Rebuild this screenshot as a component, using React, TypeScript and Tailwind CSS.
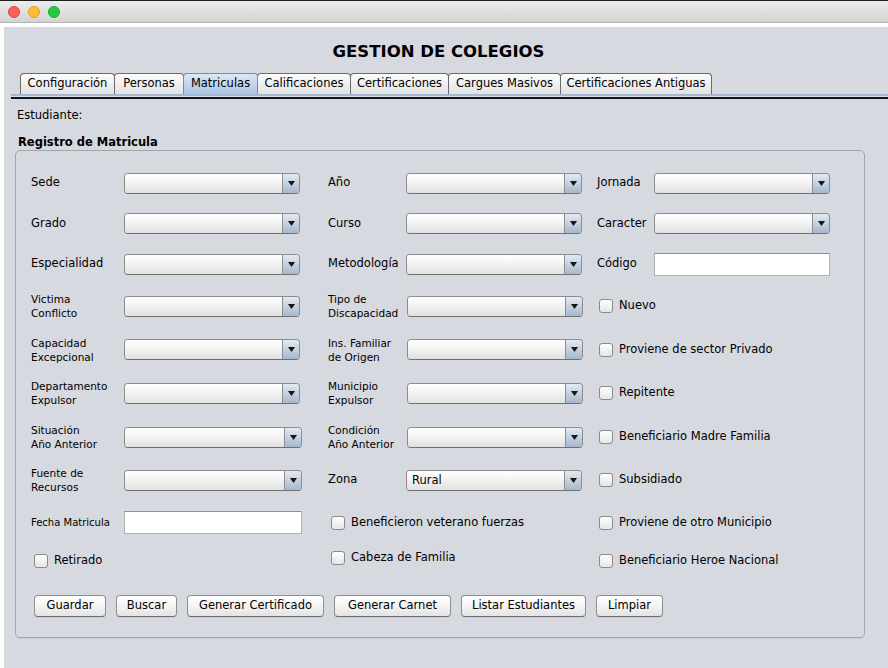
import React from 'react';

const TABS = [
  { name: 'Configuración', w: 'w-[95px]' },
  { name: 'Personas', w: 'w-[70px]' },
  { name: 'Matriculas', w: 'w-[75px]', active: true },
  { name: 'Calificaciones', w: 'w-[94px]' },
  { name: 'Certificaciones', w: 'w-[99px]' },
  { name: 'Cargues Masivos', w: 'w-[113px]' },
  { name: 'Certificaciones Antiguas', w: 'w-[152px]' },
];

const BUTTONS = [
  { name: 'Guardar', w: 'w-[72px]' },
  { name: 'Buscar', w: 'w-[61px]' },
  { name: 'Generar Certificado', w: 'w-[137px]' },
  { name: 'Generar Carnet', w: 'w-[117px]' },
  { name: 'Listar Estudiantes', w: 'w-[125px]' },
  { name: 'Limpiar', w: 'w-[67px]' },
];

function Combo({ className = 'w-[176px]', value }: { className?: string; value?: string }) {
  return (
    <div
      className={`flex h-[21px] overflow-hidden rounded-[4px] border border-[#8d8d8d] border-b-[#6f6f6f] ${className}`}
    >
      <div className="flex-1 bg-gradient-to-b from-[#ffffff] via-[#f2f2f2] to-[#e1e1e1] pl-[5px] text-[11.5px] leading-[19px] text-black">
        {value}
      </div>
      <div className="flex w-[17px] items-center justify-center border-l border-[#8d8d8d] bg-gradient-to-b from-[#e3eaf3] to-[#a6b8ce]">
        <svg width="7" height="5" viewBox="0 0 7 5">
          <path d="M0 0h7L3.5 5z" fill="#151515" />
        </svg>
      </div>
    </div>
  );
}

function TextField({ className = 'w-[176px]' }: { className?: string }) {
  return (
    <div className={`h-[23px] border border-[#b0b0b0] border-t-[#8f8f8f] bg-white ${className}`} />
  );
}

function Check({ label, className = '' }: { label: string; className?: string }) {
  return (
    <div className={`flex items-center gap-[6px] ${className}`}>
      <span className="h-[14px] w-[14px] rounded-[3px] border border-[#8a8a8a] bg-gradient-to-b from-white to-[#e6e6e6]" />
      <span className="text-[11.5px] text-black">{label}</span>
    </div>
  );
}

function Label({ children, w, two }: { children: React.ReactNode; w: string; two?: boolean }) {
  return (
    <div className={`${w} shrink-0 text-black ${two ? 'text-[10.5px] leading-[14px]' : 'text-[11.5px]'}`}>
      {children}
    </div>
  );
}

// column A starts at x=31, B at x=328, C at x=597
function CellA({ children }: { children: React.ReactNode }) {
  return <div className="flex w-[297px] shrink-0 items-center">{children}</div>;
}
function CellB({ children, className = '' }: { children: React.ReactNode; className?: string }) {
  return <div className={`flex w-[269px] shrink-0 items-center ${className}`}>{children}</div>;
}
function CellC({ children }: { children: React.ReactNode }) {
  return <div className="flex items-center">{children}</div>;
}

export default function App() {
  return (
    <div className="h-[668px] w-[888px] overflow-hidden bg-white font-['DejaVu_Sans',sans-serif]">
      {/* Title bar */}
      <div className="flex h-[23px] items-center gap-[8px] border-t border-b border-t-[#1e1e1e] border-b-[#b3b3b3] bg-gradient-to-b from-[#ececec] to-[#d4d4d4] pl-[8px]">
        <span className="h-[12px] w-[12px] rounded-full border border-[#e0443e] bg-[#fe5f57]" />
        <span className="h-[12px] w-[12px] rounded-full border border-[#dea123] bg-[#febc2e]" />
        <span className="h-[12px] w-[12px] rounded-full border border-[#1aab29] bg-[#28c840]" />
      </div>

      <div className="pl-[4px] pt-[4px]">
        <div className="h-[641px] bg-[#d6d9df]">
          <div className="pr-[15px] pt-[16px] text-center text-[16.5px] font-bold leading-[18px] text-black">
            GESTION DE COLEGIOS
          </div>

          {/* Tabs */}
          <div className="ml-[16px] mt-[12px] flex h-[21px] items-end">
            {TABS.map((t) => (
              <div
                key={t.name}
                className={`${t.w} -ml-px flex h-[21px] shrink-0 items-center justify-center rounded-t-[4px] border border-b-0 text-[11.5px] text-black first:ml-0 ${
                  t.active
                    ? 'relative z-10 border-[#6d8dbb] bg-gradient-to-b from-[#dce8f6] to-[#a9c3e4]'
                    : 'border-[#6a6a6a] bg-gradient-to-b from-[#fdfdfd] to-[#e2e2e2]'
                }`}
              >
                {t.name}
              </div>
            ))}
          </div>
          <div className="ml-[7px] h-[2px] bg-[#a6b8cf]" />
          <div className="ml-[7px] h-[1px] bg-[#dde2ea]" />
          <div className="ml-[7px] h-[2px] bg-[#0e1426]" />

          <div className="ml-[13px] mt-[9px] text-[11.5px] leading-[14px] text-black">Estudiante:</div>
          <div className="ml-[14px] mt-[13px] text-[11.5px] font-bold leading-[14px] text-black">
            Registro de Matricula
          </div>

          {/* Group box */}
          <div className="ml-[11px] mt-[1px] h-[488px] w-[850px] rounded-[5px] border border-[#a3a5a9] pl-[15px] pt-[12px] shadow-[0_1px_1px_rgba(0,0,0,0.08)]">
            <div className="flex h-[40px] items-center">
              <CellA>
                <Label w="w-[93px]">Sede</Label>
                <Combo />
              </CellA>
              <CellB>
                <Label w="w-[78px]">Año</Label>
                <Combo />
              </CellB>
              <CellC>
                <Label w="w-[57px]">Jornada</Label>
                <Combo />
              </CellC>
            </div>

            <div className="flex h-[41px] items-center">
              <CellA>
                <Label w="w-[93px]">Grado</Label>
                <Combo />
              </CellA>
              <CellB>
                <Label w="w-[78px]">Curso</Label>
                <Combo />
              </CellB>
              <CellC>
                <Label w="w-[57px]">Caracter</Label>
                <Combo />
              </CellC>
            </div>

            <div className="flex h-[40px] items-center">
              <CellA>
                <Label w="w-[93px]">Especialidad</Label>
                <Combo />
              </CellA>
              <CellB>
                <Label w="w-[78px]">Metodología</Label>
                <Combo />
              </CellB>
              <CellC>
                <Label w="w-[57px]">Código</Label>
                <TextField />
              </CellC>
            </div>

            <div className="flex h-[44px] items-center">
              <CellA>
                <Label w="w-[93px]" two>
                  Victima
                  <br />
                  Conflicto
                </Label>
                <Combo />
              </CellA>
              <CellB>
                <Label w="w-[79px]" two>
                  Tipo de
                  <br />
                  Discapacidad
                </Label>
                <Combo />
              </CellB>
              <CellC>
                <Check label="Nuevo" className="ml-[2px]" />
              </CellC>
            </div>

            <div className="flex h-[43px] items-center">
              <CellA>
                <Label w="w-[93px]" two>
                  Capacidad
                  <br />
                  Excepcional
                </Label>
                <Combo />
              </CellA>
              <CellB>
                <Label w="w-[79px]" two>
                  Ins. Familiar
                  <br />
                  de Origen
                </Label>
                <Combo />
              </CellB>
              <CellC>
                <Check label="Proviene de sector Privado" className="ml-[2px]" />
              </CellC>
            </div>

            <div className="flex h-[44px] items-center">
              <CellA>
                <Label w="w-[93px]" two>
                  Departamento
                  <br />
                  Expulsor
                </Label>
                <Combo />
              </CellA>
              <CellB>
                <Label w="w-[79px]" two>
                  Municipio
                  <br />
                  Expulsor
                </Label>
                <Combo />
              </CellB>
              <CellC>
                <Check label="Repitente" className="ml-[2px]" />
              </CellC>
            </div>

            <div className="flex h-[44px] items-center">
              <CellA>
                <Label w="w-[93px]" two>
                  Situación
                  <br />
                  Año Anterior
                </Label>
                <Combo className="w-[178px]" />
              </CellA>
              <CellB>
                <Label w="w-[79px]" two>
                  Condición
                  <br />
                  Año Anterior
                </Label>
                <Combo />
              </CellB>
              <CellC>
                <Check label="Beneficiario Madre Familia" className="ml-[2px]" />
              </CellC>
            </div>

            <div className="flex h-[42px] items-center">
              <CellA>
                <Label w="w-[93px]" two>
                  Fuente de
                  <br />
                  Recursos
                </Label>
                <Combo className="w-[178px]" />
              </CellA>
              <CellB>
                <Label w="w-[78px]">Zona</Label>
                <Combo value="Rural" />
              </CellB>
              <CellC>
                <Check label="Subsidiado" className="ml-[2px]" />
              </CellC>
            </div>

            <div className="flex h-[43px] items-center">
              <CellA>
                <div className="w-[93px] shrink-0 text-[10px] text-black">Fecha Matricula</div>
                <TextField className="w-[178px]" />
              </CellA>
              <CellB>
                <Check label="Beneficieron veterano fuerzas" className="ml-[3px]" />
              </CellB>
              <CellC>
                <Check label="Proviene de otro Municipio" className="ml-[2px]" />
              </CellC>
            </div>

            <div className="flex h-[33px] items-center">
              <CellA>
                <Check label="Retirado" className="ml-[3px]" />
              </CellA>
              <CellB className="mb-[6px]">
                <Check label="Cabeza de Familia" className="ml-[3px]" />
              </CellB>
              <CellC>
                <Check label="Beneficiario Heroe Nacional" className="ml-[2px]" />
              </CellC>
            </div>

            <div className="ml-[3px] flex h-[57px] items-center gap-[10px]">
              {BUTTONS.map((b) => (
                <button
                  key={b.name}
                  className={`${b.w} h-[22px] rounded-[4px] border border-[#8f8f8f] border-b-[#6f6f6f] bg-gradient-to-b from-[#ffffff] via-[#f4f4f4] to-[#e3e3e3] text-[11.5px] text-black shadow-[0_1px_0_rgba(0,0,0,0.05)]`}
                >
                  {b.name}
                </button>
              ))}
            </div>
          </div>
        </div>
      </div>
    </div>
  );
}
